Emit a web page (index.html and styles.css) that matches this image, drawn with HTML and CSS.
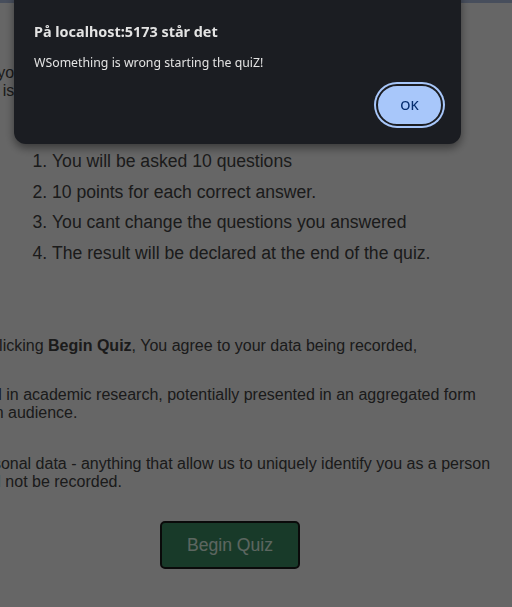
FILE: index.html
```html
<!DOCTYPE html>
<html lang="en">
<head>
<meta charset="utf-8">
<title>Quiz</title>
<link rel="stylesheet" href="styles.css">
</head>
<body>
<div class="topbar"></div>
<main class="content">
  <p class="intro">Are you ready to test your knowledge with our quiz?<br>This is how the quiz works, please read the rules below.</p>
  <ol class="rules">
    <li>You will be asked 10 questions</li>
    <li>10 points for each correct answer.</li>
    <li>You cant change the questions you answered</li>
    <li>The result will be declared at the end of the quiz.</li>
  </ol>
  <p class="consent c1">By clicking <b>Begin Quiz</b>, You agree to your data being recorded,</p>
  <p class="consent c2">Total in academic research, potentially presented in an aggregated form to an audience.</p>
  <p class="consent c3">Personal data - anything that allow us to uniquely identify you as a person shall not be recorded.</p>
  <div class="actions"><button class="begin" type="button">Begin Quiz</button></div>
</main>
<div class="backdrop"></div>
<div class="dialog" role="alertdialog">
  <div class="dialog-title">På localhost:5173 står det</div>
  <div class="dialog-msg">WSomething is wrong starting the quiZ!</div>
  <div class="dialog-actions"><button class="ok" type="button">OK</button></div>
</div>
</body>
</html>
```
FILE: styles.css
```css
html, body {
  margin: 0;
  padding: 0;
  background: #ffffff;
  overflow: hidden;
  height: 100%;
}
body {
  font-family: "Liberation Sans", Arial, sans-serif;
  color: #454545;
}
.topbar {
  height: 3px;
  background: #b2c3e6;
}
.content {
  margin-left: -32px;
  width: 524px;
}
.intro {
  font-size: 16px;
  margin: 61px 0 0 0;
  line-height: 18px;
}
.rules {
  font-size: 17.6px;
  margin: 51px 0 0 0;
  padding-left: 84px;
}
.rules li {
  line-height: 20px;
  margin-bottom: 10.7px;
}
.consent {
  font-size: 16px;
  line-height: 18px;
  margin: 0;
}
.c1 {
  margin-top: 74px;
  margin-bottom: 31px;
}
.c2 {
  margin-bottom: 33px;
}
.c3 {
  margin-bottom: 30px;
}
.actions {
  display: flex;
  justify-content: center;
}
.begin {
  width: 140px;
  height: 48px;
  background: #3c9166;
  color: #e6fff0;
  border: 2px solid #1a1a1a;
  border-radius: 5px;
  font-family: "Liberation Sans", Arial, sans-serif;
  font-size: 17.6px;
}
.backdrop {
  position: fixed;
  inset: 0;
  background: rgba(0, 0, 0, 0.6);
}
.dialog {
  position: fixed;
  left: 14px;
  top: -12px;
  width: 447px;
  height: 156px;
  box-sizing: border-box;
  padding: 34px 18px 0 20px;
  background: #1b1d22;
  border-radius: 12px;
  box-shadow: 0 4px 10px rgba(0, 0, 0, 0.45);
  font-family: "Noto Sans", "Open Sans", sans-serif;
  color: #e3e3e3;
  display: flex;
  flex-direction: column;
}
.dialog-title {
  font-weight: 700;
  font-size: 14.4px;
  line-height: 20px;
}
.dialog-msg {
  font-size: 12.3px;
  line-height: 18px;
  margin-top: 12px;
}
.dialog-actions {
  display: flex;
  justify-content: flex-end;
  margin-top: 12px;
}
.ok {
  width: 67px;
  height: 42px;
  box-sizing: border-box;
  border: 2px solid #1b1d22;
  border-radius: 21px;
  background: #a8c7fa;
  box-shadow: 0 0 0 2px #a8c7fa;
  color: #062e6f;
  font-family: "Noto Sans", "Open Sans", sans-serif;
  font-size: 13px;
  font-weight: 500;
  padding: 0;
}
```
